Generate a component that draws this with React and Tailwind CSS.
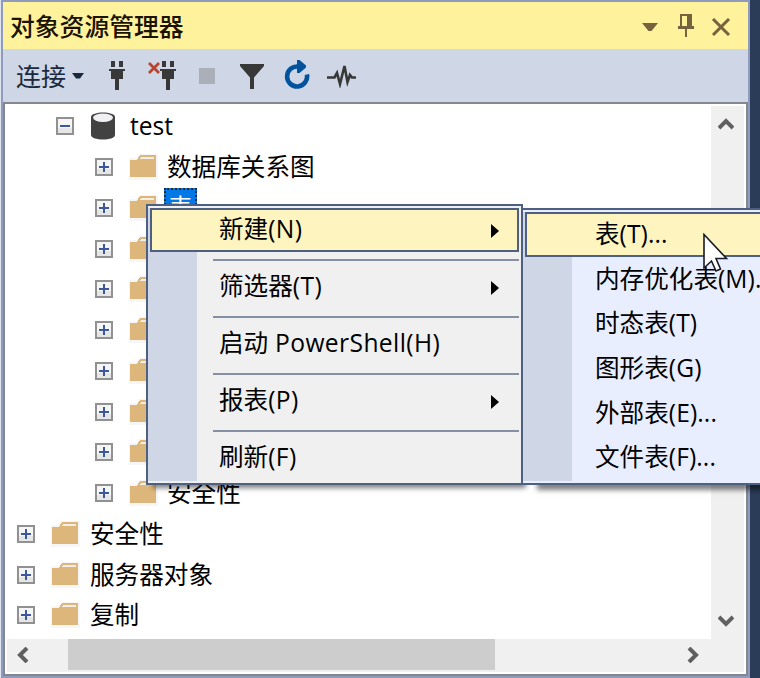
import clsx from "clsx";

// rows without a name sit behind the open context menu
const databaseNodes = ["数据库关系图", "表", "", "", "", "", "", "", "安全性"];

const serverNodes = ["安全性", "服务器对象", "复制"];

const menuItems = [
  { label: "新建", hint: "(N)", submenu: true, active: true },
  { label: "筛选器", hint: "(T)", submenu: true },
  { label: "启动", hint: " PowerShell(H)" },
  { label: "报表", hint: "(P)", submenu: true },
  { label: "刷新", hint: "(F)" },
];

const submenuItems = [
  { label: "表", hint: "(T)...", active: true },
  { label: "内存优化表", hint: "(M)..." },
  { label: "时态表", hint: "(T)" },
  { label: "图形表", hint: "(G)" },
  { label: "外部表", hint: "(E)..." },
  { label: "文件表", hint: "(F)..." },
];

function Toggle({ open }) {
  return (
    <svg width="18" height="18" className="shrink-0" shapeRendering="crispEdges">
      <rect x="1" y="1" width="16" height="16" fill="#f5f5f5" stroke="#919191" strokeWidth="2" />
      <path d="M2 11h14v5H2z" fill="#e6e6e6" />
      <path d="M4 8h10v2H4z" fill="#3b57a0" />
      {!open && <path d="M8 4h2v10H8z" fill="#3b57a0" />}
    </svg>
  );
}

function Folder() {
  return (
    <svg width="29" height="26" className="shrink-0" shapeRendering="crispEdges">
      <path d="M0 4h9V0h20v26H0z" fill="#f6f6f6" />
      <path d="M1 6h7l3-5h16v22H1z" fill="#dcb67a" />
      <path d="M12 3h13v2H10z" fill="#f3efe8" />
    </svg>
  );
}

function Database() {
  return (
    <svg width="26" height="30" className="shrink-0">
      <path d="M1 6v18c0 6 24 6 24 0V6c0-6-24-6-24 0z" fill="#424242" />
      <ellipse cx="13" cy="6.8" rx="10" ry="4.2" fill="#f0eff1" />
    </svg>
  );
}

function TreeRow({ label, level, selected }) {
  return (
    <div className={clsx("flex h-[40.75px] items-center", level === 2 ? "pl-[88px]" : "pl-[10px]")}>
      <Toggle />
      <div className="ml-4 flex">
        <Folder />
      </div>
      {selected ? (
        <span className="ml-[6px] h-[40px] border-2 border-dotted border-[#30241c] bg-[#0078e7] px-[2px] leading-[35px] text-white">
          {label}
        </span>
      ) : (
        <span className={level === 2 ? "ml-[9px]" : "ml-[10px]"}>{label}</span>
      )}
    </div>
  );
}

function TitleBar() {
  return (
    <div className="flex h-[47px] shrink-0 items-center bg-[#fff29d] pr-[17px] pl-[7px] text-[#1b1300]">
      <span className="grow text-[24.8px] font-medium">对象资源管理器</span>
      <svg width="16" height="10" className="mt-[2px]">
        <path d="M0 1h16L9.500 9h-3z" fill="#75633d" />
      </svg>
      <svg width="16" height="24" className="ml-[20px]" shapeRendering="crispEdges">
        <path d="M2 0h12v12h2v3H9v8H7v-8H0v-3h2zM4 2v10h5V2z" fill="#75633d" fillRule="evenodd" />
      </svg>
      <svg width="20" height="18" className="ml-[17px] mt-[2px]">
        <path d="M2 1l16 16M18 1L2 17" stroke="#75633d" strokeWidth="3" />
      </svg>
    </div>
  );
}

function Plug() {
  return (
    <svg width="16" height="29" shapeRendering="crispEdges">
      <path d="M2 0h4v6H2zM10 0h4v6h-4zM0 8h16v2h-2v8h-4v11H6V18H2v-8H0z" fill="#383838" />
    </svg>
  );
}

function Toolbar() {
  return (
    <div className="flex h-[53px] shrink-0 items-center bg-[#cfd6e5] pl-[13px] text-[#1b293e]">
      <span className="text-[25px]">连接</span>
      <svg width="12" height="6" className="ml-[6px]">
        <path d="M0 0h12L8 5.500H4z" fill="#1b293e" />
      </svg>
      <div className="ml-[25px] flex">
        <Plug />
      </div>
      <svg width="12" height="12" className="mb-[16px] ml-[23px]">
        <path d="M1 1l10 10M11 1L1 11" stroke="#b8442f" strokeWidth="2.800" />
      </svg>
      <div className="flex">
        <Plug />
      </div>
      <div className="ml-[23px] h-4 w-4 bg-[#abafba]" />
      <svg width="24" height="26" className="ml-[25px] mt-[3px]">
        <path d="M0 0h24v2L14 13.500V25h-4V13.500L0 2z" fill="#383838" />
      </svg>
      <svg width="26" height="31" className="ml-[20px]">
        <path d="M22.900 14.500A10 10 0 1 1 14.500 6.600" fill="none" stroke="#00539c" strokeWidth="4.600" />
        <path d="M13 0h2.500l6.500 5.500v2L15.500 13H13z" fill="#00539c" />
      </svg>
      <svg width="30" height="25" className="ml-[17px]">
        <path
          d="M0 14.500h7.500l2.500-4.500 3 11 4.500-18 3 16 2.500-7 2 2.500h4"
          fill="none"
          stroke="#383838"
          strokeWidth="2.600"
        />
      </svg>
    </div>
  );
}

function Chevron({ className }) {
  return (
    <svg width="16" height="12" className={className}>
      <path d="M1 10l7-7 7 7" fill="none" stroke="#606060" strokeWidth="4" />
    </svg>
  );
}

function Explorer() {
  return (
    <div className="flex h-[678px] w-[749px] flex-col border-2 border-[#8e9bbc]">
      <TitleBar />
      <Toolbar />
      <div className="flex min-h-0 grow flex-col border-2 border-[#828790] bg-white p-[2px]">
        <div className="flex h-[533px] shrink-0">
          <div className="h-[533px] grow">
            <div className="flex h-[40.75px] items-center pl-[49px]">
              <Toggle open />
              <div className="ml-[16px] flex">
                <Database />
              </div>
              <span className="ml-[14px]">test</span>
            </div>
            {databaseNodes.map((name, i) => (
              <TreeRow key={i} label={name} level={2} selected={name === "表"} />
            ))}
            {serverNodes.map((name) => (
              <TreeRow key={name} label={name} level={1} />
            ))}
          </div>
          <div className="flex w-[33px] shrink-0 flex-col items-center justify-between bg-[#f0f0f0] pt-3 pr-1 pb-3">
            <Chevron />
            <Chevron className="rotate-180" />
          </div>
        </div>
        <div className="flex h-[33px] shrink-0 items-center bg-[#f0f0f0] pb-[2px]">
          <Chevron className="ml-2 -rotate-90" />
          <div className="ml-[37px] h-[31px] w-[427px] bg-[#cdcdcd]" />
          <Chevron className="ml-[190px] rotate-90" />
        </div>
      </div>
    </div>
  );
}

function ContextMenu() {
  return (
    <div className="absolute top-[204px] left-[146px] h-[281px] w-[377px] border-2 border-[#4d6082] bg-[#f0f0f0] py-[2px] shadow-[5px_5px_5px_-2px_rgba(0,0,0,0.5)]">
      <div className="flex h-full flex-col bg-linear-to-r from-[#cfd6e5] from-[49px] to-[#f0f0f0] to-[49px] px-[2px]">
        {menuItems.map((item, i) => (
          <div key={item.label}>
            {i > 0 && <div className="mt-[7px] mb-1 ml-[63px] h-[2px] bg-[#8591a2]" />}
            <div
              className={clsx(
                "flex h-11 items-center justify-between border-2 pr-[18px] pb-[2px] pl-[67px]",
                item.active ? "border-[#4d6082] bg-[#fdf4bf]" : "border-transparent",
              )}
            >
              <span className="whitespace-pre">
                {item.label}
                <span className="tracking-[0.4px]">{item.hint}</span>
              </span>
              {item.submenu && (
                <svg width="8" height="14" className="mt-[3px]">
                  <path d="M0 0l8 7-8 7z" fill="#000" />
                </svg>
              )}
            </div>
          </div>
        ))}
      </div>
    </div>
  );
}

function SubMenu() {
  return (
    <div className="absolute top-[208px] left-[523px] h-[277px] w-[260px] border-y-2 border-[#4d6082] bg-[#e9eefe] py-[2px] shadow-[14px_5px_5px_0_rgba(0,0,0,0.5)]">
      <div className="h-full bg-linear-to-r from-[#cfd6e5] from-[49px] to-[#e9eefe] to-[49px] px-[2px]">
        {submenuItems.map((item) => (
          <div
            key={item.label}
            className={clsx(
              "flex h-[44.7px] items-center border-2 pb-px pl-[68px]",
              item.active ? "border-[#4d6082] bg-[#fdf4bf]" : "border-transparent",
            )}
          >
            <span>
              {item.label}
              <span className="tracking-[0.1px]">{item.hint}</span>
            </span>
          </div>
        ))}
      </div>
    </div>
  );
}

function Cursor() {
  return (
    <svg width="26" height="40" className="absolute top-[233px] left-[703px]">
      <path
        d="M1 1.500V35l7.500-7 4.500 10 4.500-2-4.500-10.500h10.500z"
        fill="#fff"
        stroke="#1a1a24"
        strokeWidth="1.600"
      />
    </svg>
  );
}

export default function App() {
  return (
    <div className="relative h-[678px] w-[760px] overflow-hidden border-l border-[#dfe4ee] bg-[#2b3c59] font-['Open_Sans','Noto_Sans_CJK_SC',sans-serif] text-[24.6px] leading-[36px] whitespace-nowrap text-black">
      <Explorer />
      <div className="absolute inset-0 -left-px">
        <ContextMenu />
        <SubMenu />
        <Cursor />
      </div>
    </div>
  );
}
